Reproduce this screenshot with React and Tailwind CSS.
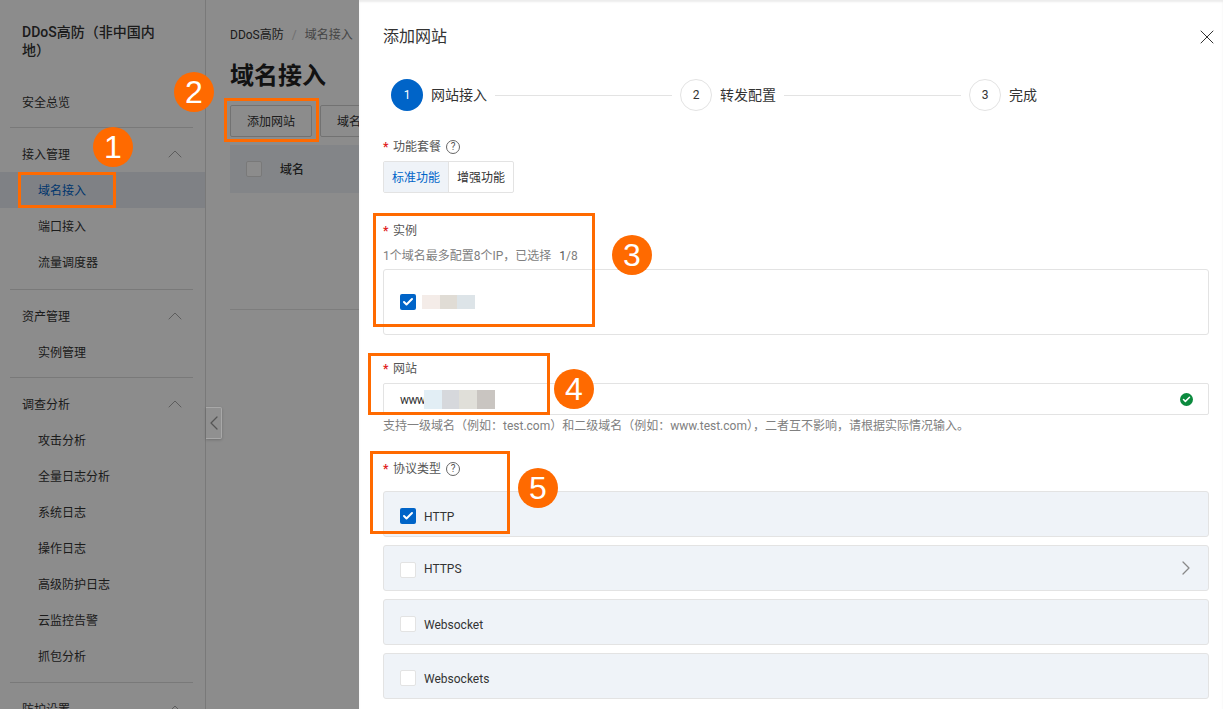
import { ChevronUp, ChevronRight, ChevronLeft, X, Check } from 'lucide-react'

const navGroups = [
  { title: '接入管理', items: ['域名接入', '端口接入', '流量调度器'], h: 'h-[162px]' },
  { title: '资产管理', items: ['实例管理'], h: 'h-[88px]' },
  { title: '调查分析', items: ['攻击分析', '全量日志分析', '系统日志', '操作日志', '高级防护日志', '云监控告警', '抓包分析'], h: 'h-[305px]' },
]

const marks = [
  { n: 1, box: 'left-[18px] top-[172px] w-[98px] h-[36px]', dot: 'left-[93px] top-[127px]' },
  { n: 2, box: 'left-[224px] top-[98px] w-[95px] h-[44px]', dot: 'left-[174px] top-[72px]' },
  { n: 3, box: 'left-[373px] top-[213px] w-[222px] h-[114px]', dot: 'left-[612px] top-[235px]' },
  { n: 4, box: 'left-[368px] top-[353px] w-[182px] h-[62px]', dot: 'left-[554px] top-[369px]' },
  { n: 5, box: 'left-[370px] top-[451px] w-[140px] h-[83px]', dot: 'left-[518px] top-[468px]' },
]

function NavHeader({ title }) {
  return (
    <div className="flex h-[44px] items-center justify-between pl-[22px] pr-[18px] pt-[8px]">
      <span className="pt-[2px]">{title}</span>
      <ChevronUp className="h-[24px] w-[24px] text-[#aaa]" strokeWidth={1} />
    </div>
  )
}

function Sidebar() {
  return (
    <aside className="h-[709px] w-[206px] shrink-0 overflow-hidden border-r border-[#dcdcdc] bg-white pt-[23px] text-[12px] text-[#333]">
      <div className="ml-[22px] w-[138px] text-[14px] font-medium leading-[18px] text-[#333]">DDoS高防（非中国内地）</div>
      <div className="mx-[22px] mt-[31px] h-[24px] leading-[26px]">安全总览</div>
      <div className="ml-[10px] mr-[12px] mt-[13px] border-t border-[#ddd]" />
      {navGroups.map((group) => (
        <div key={group.title} className={`flex flex-col ${group.h}`}>
          <NavHeader title={group.title} />
          {group.items.map((item) => (
            <div
              key={item}
              className={`flex h-[36px] shrink-0 items-center pl-[38px] pt-[2px] ${item === '域名接入' ? 'bg-[#e8ebf2] text-[#0064c8]' : ''}`}
            >
              {item}
            </div>
          ))}
          <div className="ml-[10px] mr-[12px] mt-auto border-t border-[#ddd]" />
        </div>
      ))}
      <NavHeader title="防护设置" />
    </aside>
  )
}

function MainPanel() {
  return (
    <main className="relative flex-1 overflow-hidden pl-[24px] pt-[24px] text-[12px] text-[#333]">
      <div className="flex h-[20px] items-center whitespace-nowrap pt-[2px]">
        <span>DDoS高防</span>
        <span className="mx-[8px] text-[#ccc]">/</span>
        <span className="text-[#808080]">域名接入</span>
      </div>
      <h1 className="mt-[16px] h-[30px] text-[24px] font-bold leading-[32px] text-[#222]">域名接入</h1>
      <div className="mt-[15px] flex gap-[8px] whitespace-nowrap">
        <div className="flex h-[32px] w-[82px] items-center justify-center rounded-[2px] border border-[#d0d0d0] bg-white pt-[2px]">添加网站</div>
        <div className="flex h-[32px] w-[82px] items-center justify-center rounded-[2px] border border-[#d0d0d0] bg-white pt-[2px]">域名接入</div>
      </div>
      <div className="mt-[8px] flex h-[48px] items-center bg-[#eff3f8] pl-[16px] font-medium">
        <span className="h-[16px] w-[16px] rounded-[2px] border border-[#ddd] bg-white" />
        <span className="ml-[18px] pt-[2px]">域名</span>
      </div>
      <div className="h-[117px] border-b border-[#e3e3e3]" />
    </main>
  )
}

function Req({ children, help }) {
  return (
    <div className="flex h-[18px] items-center pt-[2px] text-[12px] text-[#555]">
      <span className="w-[10px] font-bold leading-none text-[#e02020]">*</span>
      <span>{children}</span>
      {help && <Help />}
    </div>
  )
}

function Help() {
  return (
    <span className="ml-[5px] flex h-[14px] w-[14px] items-center justify-center rounded-full border border-[#666] text-[10px] leading-none text-[#555]">?</span>
  )
}

function Tick() {
  return (
    <span className="flex h-[16px] w-[16px] shrink-0 items-center justify-center rounded-[2px] bg-[#0064c8]">
      <Check className="h-[12px] w-[12px] text-white" strokeWidth={4} />
    </span>
  )
}

function Step({ n, label, active, last }) {
  return (
    <div className={`flex items-center ${last ? '' : 'w-[289px]'}`}>
      <span className={`flex h-[32px] w-[32px] shrink-0 items-center justify-center rounded-full text-[12px] ${active ? 'bg-[#0064c8] text-white' : 'border border-[#e3e3e3] text-[#333]'}`}>{n}</span>
      <span className="ml-[8px] whitespace-nowrap text-[14px] text-[#333]">{label}</span>
      {!last && <span className="mx-[8px] flex-1 border-t border-[#e3e3e3]" />}
    </div>
  )
}

function ProtocolRow({ label, checked, arrow, mt, labelShift }) {
  return (
    <div className={`flex h-[46px] items-center justify-between rounded-[3px] border border-[#e3e3e3] bg-[#eff3f8] pl-[16px] pr-[10px] ${mt}`}>
      <div className="flex translate-y-[2px] items-center gap-[8px]">
        {checked ? <Tick /> : <span className="h-[16px] w-[16px] rounded-[2px] border border-[#e3e3e3] bg-white" />}
        <span className={`text-[12px] text-[#333] ${labelShift}`}>{label}</span>
      </div>
      {arrow && <ChevronRight className="h-[24px] w-[24px] text-[#888]" strokeWidth={1.25} />}
    </div>
  )
}

function Drawer() {
  return (
    <section className="absolute right-0 top-0 h-[709px] w-[864px] overflow-hidden bg-white pl-[24px] pr-[14px] shadow-[inset_0_2px_2px_rgba(0,0,0,0.08)]">
      <div className="flex h-[72px] items-center justify-between">
        <h2 className="translate-y-[1px] text-[16px] font-normal text-[#333]">添加网站</h2>
        <X className="-mr-[10px] translate-y-[1px] h-[24px] w-[24px] text-[#333]" strokeWidth={1} />
      </div>
      <div className="ml-[8px] mt-[7px] flex h-[32px]">
        <Step n={1} label="网站接入" active />
        <Step n={2} label="转发配置" />
        <Step n={3} label="完成" last />
      </div>

      <div className="mt-[26px]">
        <Req help>功能套餐</Req>
      </div>
      <div className="mt-[6px] flex h-[32px] w-[131px] rounded-[2px] border border-[#e3e3e3] text-[12px]">
        <span className="flex w-[65px] items-center justify-center border-r border-[#e3e3e3] bg-[#eff3f8] pt-[2px] text-[#0064c8]">标准功能</span>
        <span className="flex flex-1 items-center justify-center pt-[2px] text-[#333]">增强功能</span>
      </div>

      <div className="mt-[28px]">
        <Req>实例</Req>
      </div>
      <div className="mt-[8px] h-[18px] text-[12px] leading-[18px] text-[#808080]">
        1个域名最多配置8个IP，已选择 <span className="ml-[5px] text-[#555]">1</span>/8
      </div>
      <div className="mt-[4px] flex h-[66px] items-center rounded-[3px] border border-[#e3e3e3] pl-[16px]">
        <Tick />
        <span className="ml-[6px] flex h-[14px]">
          <span className="w-[18px] bg-[#f4ece8]" />
          <span className="w-[17px] bg-[#e0dcd5]" />
          <span className="w-[18px] bg-[#dde4e8]" />
        </span>
      </div>

      <div className="mt-[24px]">
        <Req>网站</Req>
      </div>
      <div className="mt-[6px] flex h-[32px] items-center justify-between rounded-[2px] border border-[#e3e3e3] pl-[16px] pr-[15px] text-[12px] text-[#333]">
        <span className="flex items-center">
          <span className="w-[24px] pt-[2px] tracking-[-0.6px]">www</span>
          <span className="flex h-[19px]">
            <span className="w-[18px] bg-[#e2eef5]" />
            <span className="w-[17px] bg-[#d6d8dc]" />
            <span className="w-[18px] bg-[#e0dfd9]" />
            <span className="w-[18px] bg-[#c9c5c1]" />
          </span>
        </span>
        <span className="flex h-[13px] w-[13px] items-center justify-center rounded-full bg-[#0b8a3e]">
          <Check className="h-[9px] w-[9px] text-white" strokeWidth={4} />
        </span>
      </div>
      <div className="mt-[2px] h-[18px] whitespace-nowrap text-[12px] leading-[18px] text-[#808080]">
        支持一级域名（例如：test.com）和二级域名（例如：www.test.com），二者互不影响，请根据实际情况输入。
      </div>

      <div className="mt-[24px]">
        <Req help>协议类型</Req>
      </div>
      <ProtocolRow label="HTTP" checked mt="mt-[14px]" labelShift="translate-y-[1px]" />
      <ProtocolRow label="HTTPS" arrow mt="mt-[8px]" labelShift="-translate-y-[1px]" />
      <ProtocolRow label="Websocket" mt="mt-[8px]" labelShift="translate-y-[1px]" />
      <ProtocolRow label="Websockets" mt="mt-[8px]" labelShift="translate-y-[1px]" />
    </section>
  )
}

export default function App() {
  return (
    <div className="relative h-[709px] w-[1223px] overflow-hidden bg-white font-['Roboto','Noto_Sans_CJK_SC',sans-serif]">
      <div className="flex h-full">
        <Sidebar />
        <MainPanel />
      </div>
      {/* page mask under the drawer */}
      <div className="absolute inset-0 bg-black/45" />
      <button className="absolute left-[206px] top-[407px] flex h-[32px] w-[16px] items-center justify-center rounded-r-[2px] border border-l-0 border-[#a8a8a8] bg-[#909090] shadow-[0_1px_3px_rgba(0,0,0,0.2)]">
        <ChevronLeft className="h-[24px] w-[24px] shrink-0 text-[#555]" strokeWidth={1.25} />
      </button>
      <Drawer />
      {marks.map((m) => (
        <div key={m.n}>
          <div className={`absolute border-[3px] border-[#ff6a00] ${m.box}`} />
          <div className={`absolute flex h-[40px] w-[40px] items-center justify-center rounded-full bg-[#ff6a00] font-['Liberation_Sans',sans-serif] text-[32px] leading-none text-white ${m.dot}`}>{m.n}</div>
        </div>
      ))}
    </div>
  )
}
